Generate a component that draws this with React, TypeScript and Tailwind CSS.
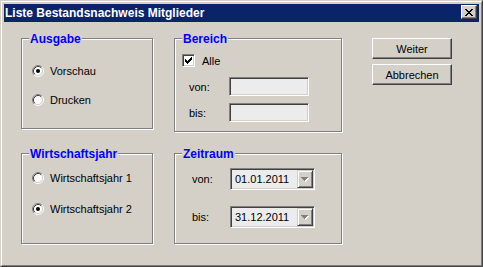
import React from 'react';

function Radio({ checked }: { checked?: boolean }) {
  return (
    <svg width="12" height="12" viewBox="0 0 12 12" className="shrink-0">
      <circle cx="6" cy="6" r="4.5" fill="#fff" />
      <path d="M2.11 9.89 A5.5 5.5 0 0 1 9.89 2.11" fill="none" stroke="#808080" strokeWidth="1" />
      <path d="M9.89 2.11 A5.5 5.5 0 0 1 2.11 9.89" fill="none" stroke="#fff" strokeWidth="1" />
      <path d="M2.82 9.18 A4.5 4.5 0 0 1 9.18 2.82" fill="none" stroke="#404040" strokeWidth="1" />
      <path d="M9.18 2.82 A4.5 4.5 0 0 1 2.82 9.18" fill="none" stroke="#d4d0c8" strokeWidth="1" />
      {checked && <circle cx="6" cy="6" r="2" fill="#000" />}
    </svg>
  );
}

function RadioRow({ label, checked }: { label: string; checked?: boolean }) {
  return (
    <div className="flex h-[12px] items-center gap-[6px]">
      <Radio checked={checked} />
      <span className="text-[11px] leading-[12px] text-black">{label}</span>
    </div>
  );
}

function GroupBox({ title, className, children }: { title: string; className: string; children: React.ReactNode }) {
  return (
    <div className={'relative border border-[#808080] shadow-[inset_1px_1px_0_#fff,1px_1px_0_#fff] ' + className}>
      <span className="absolute left-[7px] top-[-7px] bg-[#d4d0c8] px-[1px] text-[12px] font-bold leading-[14px] text-[#0000ff]">
        {title}
      </span>
      {children}
    </div>
  );
}

// sunken 3d field
function Field({ className, children }: { className: string; children?: React.ReactNode }) {
  return (
    <div
      className={
        'border border-t-[#808080] border-l-[#808080] border-r-white border-b-white shadow-[inset_1px_1px_0_#404040,inset_-1px_-1px_0_#d4d0c8] bg-[#ececec] ' +
        className
      }
    >
      {children}
    </div>
  );
}

function Combo({ value }: { value: string }) {
  return (
    <Field className="flex h-[22px] w-[85px] items-center p-[1px]">
      <span className="flex-1 pl-[3px] text-[11px] leading-[12px] text-black">{value}</span>
      <div className="flex h-[18px] w-[16px] items-center justify-center border border-t-[#d4d0c8] border-l-[#d4d0c8] border-r-[#404040] border-b-[#404040] bg-[#d4d0c8] shadow-[inset_1px_1px_0_#fff,inset_-1px_-1px_0_#808080]">
        <svg width="8" height="5" viewBox="0 0 8 5">
          <g fill="#fff">
            <rect x="1" y="1" width="7" height="1" />
            <rect x="2" y="2" width="5" height="1" />
            <rect x="3" y="3" width="3" height="1" />
            <rect x="4" y="4" width="1" height="1" />
          </g>
          <g fill="#808080">
            <rect x="0" y="0" width="7" height="1" />
            <rect x="1" y="1" width="5" height="1" />
            <rect x="2" y="2" width="3" height="1" />
            <rect x="3" y="3" width="1" height="1" />
          </g>
        </svg>
      </div>
    </Field>
  );
}

function Button({ label }: { label: string }) {
  return (
    <div className="flex h-[21px] w-[80px] items-center justify-center border border-t-white border-l-white border-r-[#404040] border-b-[#404040] shadow-[inset_-1px_-1px_0_#808080] text-[11px] leading-[12px] text-black">
      {label}
    </div>
  );
}

export default function App() {
  return (
    <div className="h-[267px] w-[483px] border border-t-[#d4d0c8] border-l-[#d4d0c8] border-r-[#404040] border-b-[#404040] bg-[#d4d0c8] font-['Liberation_Sans',Arial,sans-serif]">
      <div className="h-full border border-t-white border-l-white border-r-[#808080] border-b-[#808080] p-[2px]">
        {/* Title bar */}
        <div className="flex h-[18px] items-start justify-between bg-[#0a246a] pl-[1px] pr-[2px]">
          <span className="text-[12px] font-bold leading-[18px] text-white">Liste Bestandsnachweis Mitglieder</span>
          <div className="mt-[1px] flex h-[14px] w-[16px] items-center justify-center border border-t-white border-l-white border-r-[#404040] border-b-[#404040] bg-[#d4d0c8] shadow-[inset_-1px_-1px_0_#808080]">
            <svg width="8" height="7" viewBox="0 0 8 7" fill="#000">
              <rect x="0" y="0" width="2" height="1" />
              <rect x="6" y="0" width="2" height="1" />
              <rect x="1" y="1" width="2" height="1" />
              <rect x="5" y="1" width="2" height="1" />
              <rect x="2" y="2" width="4" height="1" />
              <rect x="3" y="3" width="2" height="1" />
              <rect x="2" y="4" width="4" height="1" />
              <rect x="1" y="5" width="2" height="1" />
              <rect x="5" y="5" width="2" height="1" />
              <rect x="0" y="6" width="2" height="1" />
              <rect x="6" y="6" width="2" height="1" />
            </svg>
          </div>
        </div>

        {/* Body */}
        <div className="flex pl-[17px] pt-[16px]">
          <div className="flex w-[132px] flex-col">
            <GroupBox title="Ausgabe" className="h-[91px]">
              <div className="flex flex-col gap-[17px] pl-[10px] pt-[26px]">
                <RadioRow label="Vorschau" checked />
                <RadioRow label="Drucken" />
              </div>
            </GroupBox>
            <GroupBox title="Wirtschaftsjahr" className="mt-[24px] h-[91px]">
              <div className="flex flex-col gap-[19px] pl-[10px] pt-[18px]">
                <RadioRow label="Wirtschaftsjahr 1" />
                <RadioRow label="Wirtschaftsjahr 2" checked />
              </div>
            </GroupBox>
          </div>

          <div className="ml-[21px] flex w-[168px] flex-col">
            <GroupBox title="Bereich" className="h-[94px]">
              <div className="flex flex-col pl-[7px] pt-[15px]">
                <div className="flex h-[13px] items-center gap-[7px]">
                  <div className="flex h-[13px] w-[13px] items-center justify-center border border-t-[#808080] border-l-[#808080] border-r-white border-b-white bg-white shadow-[inset_1px_1px_0_#404040,inset_-1px_-1px_0_#d4d0c8]">
                    <svg width="7" height="7" viewBox="0 0 7 7" fill="#000">
                      <rect x="0" y="2" width="1" height="3" />
                      <rect x="1" y="3" width="1" height="3" />
                      <rect x="2" y="4" width="1" height="3" />
                      <rect x="3" y="3" width="1" height="3" />
                      <rect x="4" y="2" width="1" height="3" />
                      <rect x="5" y="1" width="1" height="3" />
                      <rect x="6" y="0" width="1" height="3" />
                    </svg>
                  </div>
                  <span className="text-[11px] leading-[12px] text-black">Alle</span>
                </div>
                <div className="mt-[10px] flex items-center pl-[7px]">
                  <span className="w-[40px] text-[11px] leading-[12px] text-black">von:</span>
                  <Field className="h-[19px] w-[80px]" />
                </div>
                <div className="mt-[7px] flex items-center pl-[7px]">
                  <span className="w-[40px] text-[11px] leading-[12px] text-black">bis:</span>
                  <Field className="h-[19px] w-[80px]" />
                </div>
              </div>
            </GroupBox>
            <GroupBox title="Zeitraum" className="mt-[21px] h-[91px]">
              <div className="flex flex-col pl-[17px] pt-[14px]">
                <div className="flex items-center">
                  <span className="w-[38px] text-[11px] leading-[12px] text-black">von:</span>
                  <Combo value="01.01.2011" />
                </div>
                <div className="mt-[16px] flex items-center">
                  <span className="w-[38px] text-[11px] leading-[12px] text-black">bis:</span>
                  <Combo value="31.12.2011" />
                </div>
              </div>
            </GroupBox>
          </div>

          <div className="ml-[30px] flex flex-col gap-[5px]">
            <Button label="Weiter" />
            <Button label="Abbrechen" />
          </div>
        </div>
      </div>
    </div>
  );
}
